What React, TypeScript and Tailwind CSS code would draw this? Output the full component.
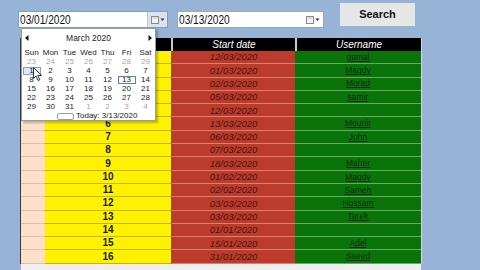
import React from "react";

const rows = [
  { n: 1, date: "12/03/2020", user: "gamal" },
  { n: 2, date: "01/03/2020", user: "Magdy" },
  { n: 3, date: "02/03/2020", user: "Morad" },
  { n: 4, date: "05/03/2020", user: "samir" },
  { n: 5, date: "12/03/2020", user: "" },
  { n: 6, date: "13/03/2020", user: "Mounir" },
  { n: 7, date: "06/03/2020", user: "John" },
  { n: 8, date: "07/03/2020", user: "" },
  { n: 9, date: "18/03/2020", user: "Maher" },
  { n: 10, date: "01/02/2020", user: "Magdy" },
  { n: 11, date: "02/02/2020", user: "Sameh" },
  { n: 12, date: "03/03/2020", user: "Hossam" },
  { n: 13, date: "03/03/2020", user: "Tarek" },
  { n: 14, date: "01/01/2020", user: "" },
  { n: 15, date: "15/01/2020", user: "Adel" },
  { n: 16, date: "31/01/2020", user: "Saeed" },
];

const weeks = [
  [23, 24, 25, 26, 27, 28, 29],
  [1, 2, 3, 4, 5, 6, 7],
  [8, 9, 10, 11, 12, 13, 14],
  [15, 16, 17, 18, 19, 20, 21],
  [22, 23, 24, 25, 26, 27, 28],
  [29, 30, 31, 1, 2, 3, 4],
];

const days = ["Sun", "Mon", "Tue", "Wed", "Thu", "Fri", "Sat"];

function PickerIcon() {
  return (
    <svg width="14" height="8" viewBox="0 0 14 8">
      <rect x="0.5" y="0.5" width="7" height="7" fill="#f2f2f2" stroke="#8a8a8a" />
      <rect x="1.5" y="1.5" width="5" height="1" fill="#c8c8c8" />
      <path d="M9.5 2.5 L13.5 2.5 L11.5 5 Z" fill="#333" />
    </svg>
  );
}

function Calendar() {
  return (
    <div className="absolute left-[21px] top-[28px] w-[135px] h-[93px] bg-white border border-[#9a9a9a] shadow-[2px_2px_2px_rgba(0,0,0,0.25)] font-['Liberation_Sans',sans-serif] text-[8px] leading-none text-[#222]">
      <div className="flex items-center justify-between h-[12px] mt-[3px] px-[3px]">
        <svg width="4" height="6" viewBox="0 0 4 6">
          <path d="M3.5 0 L0 3 L3.5 6 Z" fill="#111" />
        </svg>
        <span className="text-[8.5px]">March 2020</span>
        <svg width="4" height="6" viewBox="0 0 4 6">
          <path d="M0.5 0 L4 3 L0.5 6 Z" fill="#111" />
        </svg>
      </div>
      <div className="grid grid-cols-[repeat(7,19px)] h-[9px] mt-[4px]">
        {days.map((d) => (
          <div key={d} className="flex items-center justify-center">
            {d}
          </div>
        ))}
      </div>
      {weeks.map((w, wi) => (
        <div key={wi} className="grid grid-cols-[repeat(7,19px)] h-[9px]">
          {w.map((d, di) => {
            const other = wi === 0 || (wi === 5 && di > 2);
            const selected = wi === 1 && di === 0;
            const today = wi === 2 && di === 5;
            return (
              <div key={di} className="flex items-center justify-center">
                <span
                  className={
                    "flex items-center justify-center w-[18px] h-[8px] " +
                    (other ? "text-[#a8a8a8] " : "") +
                    (selected ? "bg-[#dde9f6] border border-[#7fa4cf] " : "") +
                    (today ? "border border-[#5f7f9f] " : "")
                  }
                >
                  {d}
                </span>
              </div>
            );
          })}
        </div>
      ))}
      <div className="flex items-center h-[10px] pl-[35px]">
        <span className="w-[17px] h-[7px] border border-[#7fa4cf] rounded-[2px] mr-[2px]" />
        <span>Today: 3/13/2020</span>
      </div>
      <svg className="absolute left-[11px] top-[38px]" width="10" height="15" viewBox="0 0 10 15">
        <path d="M0.5 0.5 L0.5 11.5 L3 9 L5 13.5 L6.8 12.7 L4.8 8.5 L8.5 8.5 Z" fill="#fff" stroke="#000" strokeWidth="0.8" />
      </svg>
    </div>
  );
}

export default function App() {
  return (
    <div className="relative w-[480px] h-[270px] overflow-hidden bg-[#97b3d5] font-['Liberation_Sans',sans-serif]">
      <div className="flex items-start h-[38px] pl-[18px]">
        <div className="flex mt-[11px] h-[17px] w-[150px] border border-[#7d9fc7]">
          <div className="flex items-center w-[128px] bg-white pl-[1px]">
            <span className="text-[13px] leading-none text-[#111] origin-left scale-x-[0.78]">03/01/2020</span>
          </div>
          <div className="flex items-center justify-center flex-1 bg-[#dbe4ee] border-l border-[#b9c8d8]">
            <PickerIcon />
          </div>
        </div>
        <div className="flex items-center justify-between mt-[11px] ml-[9px] h-[17px] w-[147px] bg-white border border-[#9aaabb] pl-[1px] pr-[3px]">
          <span className="text-[13px] leading-none text-[#111] origin-left scale-x-[0.78]">03/13/2020</span>
          <PickerIcon />
        </div>
        <button className="flex items-center justify-center mt-[3px] ml-[16px] w-[75px] h-[23px] bg-[#e6e6e6] text-[11px] font-bold text-[#111]">
          Search
        </button>
      </div>

      <div className="ml-[20px] w-[402px] border-l border-[#3a3a3a] border-r border-r-[#cfd8e0]">
        <div className="grid grid-cols-[24px_126px_124px_126px] h-[13px] bg-black text-white italic text-[10px] leading-none">
          <div />
          <div />
          <div className="flex items-center justify-center border-l-2 border-[#c8c8c8]">Start date</div>
          <div className="flex items-center justify-center border-l-2 border-[#c8c8c8]">Username</div>
        </div>
        {rows.map((r) => (
          <div key={r.n} className="grid grid-cols-[24px_126px_124px_126px] h-[13.3px] leading-none">
            <div className="bg-[#fde0c9] border-b border-[#dcc0aa]" />
            <div className="flex items-center justify-center bg-[#fff200] border-b border-[#c9b400] text-[10px] font-bold text-[#1a1a1a]">
              {r.n}
            </div>
            <div className="flex items-center justify-center bg-[#bb3b2c] border-b border-[#d9806f] border-l border-l-[#8a5a20] italic text-[9.5px] text-[#4a1410]">
              {r.date}
            </div>
            <div className="flex items-center justify-center bg-[#0a740a] border-b border-[#5fae5f] text-[8.5px] text-[#0a300a] underline">
              {r.user}
            </div>
          </div>
        ))}
      </div>
      <div className="ml-[21px] w-[400px] h-[10px] bg-[#efefef]" />

      <Calendar />
    </div>
  );
}
